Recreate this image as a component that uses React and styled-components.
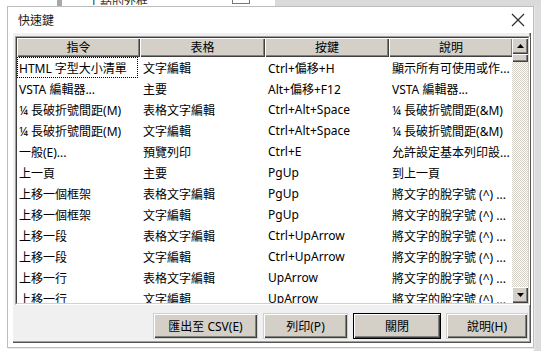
import styled, { createGlobalStyle } from "styled-components";

const Global = createGlobalStyle`
  html, body {
    margin: 0;
    padding: 0;
    background: #fff;
  }
  body {
    font-family: "Segoe UI", "Noto Sans", "Noto Sans CJK TC", sans-serif;
    font-size: 12px;
    color: #000;
  }
`;

const font = `"Segoe UI", "Noto Sans", "Noto Sans CJK TC", sans-serif`;

const Desktop = styled.div`
  position: relative;
  width: 541px;
  height: 351px;
  overflow: hidden;
  background: #fff;
  display: flex;
  flex-direction: column;
`;

const BackTop = styled.div`
  height: 6px;
  display: flex;
  align-items: flex-end;
  background: #fff;
  .bar {
    width: 5px;
    height: 6px;
    margin-left: 57px;
    background: #a8a8a8;
  }
  .label {
    margin-left: 28px;
    font-size: 12px;
    line-height: 6px;
    height: 6px;
    overflow: hidden;
    color: #333;
    align-self: flex-end;
    transform: translateY(-1px);
  }
  .btn {
    margin-left: 84px;
    width: 16px;
    height: 3px;
    border: 1px solid #777;
    border-top: none;
    align-self: flex-start;
  }
  .grey {
    flex: 1;
    margin-left: 25px;
    height: 6px;
    background: #dadada;
  }
`;

const BackBody = styled.div`
  flex: 1;
  display: flex;
  justify-content: flex-end;
  .side {
    width: 7px;
    background: #dcdcdc;
    border-left: 1px solid #f4f4f4;
  }
`;

const Dialog = styled.div`
  position: absolute;
  left: 7px;
  top: 6px;
  width: 527px;
  height: 342px;
  box-sizing: border-box;
  background: #fff;
  border: 1px solid #bdbdbd;
  display: flex;
  flex-direction: column;
  padding: 0 2px 4px 4px;
  box-shadow: 1px 1px 0 #e9e9e9;
`;

const TitleBar = styled.div`
  height: 25px;
  display: flex;
  align-items: center;
  justify-content: space-between;
  padding: 0 6px 0 6px;
  font-family: ${font};
  font-size: 12px;
  color: #1a1a1a;
`;

const Client = styled.div`
  flex: 1;
  background: #f0f0f0;
  display: flex;
  flex-direction: column;
  padding: 4px 1px 2px 3px;
  box-shadow: inset 1px 1px 0 #fff, inset -1px -1px 0 #555, inset -2px -2px 0 #a0a0a0;
`;

const List = styled.div`
  height: 269px;
  box-sizing: border-box;
  border-style: solid;
  border-width: 1px;
  border-color: #a0a0a0 #fff #fff #a0a0a0;
  background: #fff;
  display: flex;
`;

const ListInner = styled.div`
  flex: 1;
  display: flex;
  border-style: solid;
  border-width: 1px;
  border-color: #404040 #d4d0c8 #d4d0c8 #404040;
  overflow: hidden;
`;

const Table = styled.div`
  flex: 1;
  display: flex;
  flex-direction: column;
  overflow: hidden;
`;

const cols = "123px 125px 124px 124px";

const Header = styled.div`
  display: grid;
  grid-template-columns: ${cols};
  height: 19px;
  flex: none;
`;

const HeadCell = styled.div`
  background: #d4d0c8;
  box-sizing: border-box;
  box-shadow: inset 1px 1px 0 #fff, inset -1px -1px 0 #404040, inset -2px -2px 0 #808080;
  display: flex;
  align-items: center;
  justify-content: center;
  font-size: 12px;
  padding-bottom: 1px;
`;

const Row = styled.div`
  display: grid;
  grid-template-columns: ${cols};
  height: 21px;
  flex: none;
`;

const Cell = styled.div`
  display: flex;
  align-items: center;
  padding-left: ${(p) => (p.$first ? 2 : 3)}px;
  white-space: nowrap;
  overflow: hidden;
  font-size: 12px;
  outline: ${(p) => (p.$focus ? "1px dotted #000" : "none")};
  outline-offset: -1px;
  margin-right: ${(p) => (p.$focus ? 2 : 0)}px;
`;

const Scroll = styled.div`
  width: 16px;
  display: flex;
  flex-direction: column;
  background: repeating-conic-gradient(#fff 0 25%, #d4d0c8 0 50%) 0 0 / 2px 2px;
`;

const ScrollBtn = styled.div`
  height: 16px;
  flex: none;
  box-sizing: border-box;
  background: #d4d0c8;
  box-shadow: inset 1px 1px 0 #fff, inset -1px -1px 0 #404040, inset -2px -2px 0 #808080;
  display: flex;
  align-items: center;
  justify-content: center;
`;

const Thumb = styled.div`
  height: 8px;
  flex: none;
  background: #d4d0c8;
  box-shadow: inset 1px 1px 0 #fff, inset -1px -1px 0 #404040, inset -2px -2px 0 #808080;
`;

const Track = styled.div`
  flex: 1;
`;

const Buttons = styled.div`
  margin-top: 8px;
  display: flex;
  justify-content: flex-end;
  gap: 5px;
  padding-right: 2px;
`;

const Button = styled.div`
  width: ${(p) => p.$w}px;
  height: 26px;
  box-sizing: border-box;
  background: #d4d0c8;
  display: flex;
  align-items: center;
  justify-content: center;
  font-size: 12px;
  border: 1px solid ${(p) => (p.$default ? "#000" : "transparent")};
  box-shadow: inset 1px 1px 0 #fff, inset -1px -1px 0 #404040, inset -2px -2px 0 #808080;
`;

const Arrow = ({ down }) => (
  <svg width="7" height="4" viewBox="0 0 7 4">
    <path d={down ? "M0 0H7L3.5 4Z" : "M0 4H7L3.5 0Z"} fill="#000" />
  </svg>
);

const Close = () => (
  <svg width="14" height="14" viewBox="0 0 14 14">
    <path d="M1 1L13 13M13 1L1 13" stroke="#333" strokeWidth="1.3" fill="none" />
  </svg>
);

const shift = "將文字的脫字號 (^) ...";

const rows = [
  ["HTML 字型大小清單", "文字編輯", "Ctrl+偏移+H", "顯示所有可使用或作..."],
  ["VSTA 編輯器...", "主要", "Alt+偏移+F12", "VSTA 編輯器..."],
  ["¼ 長破折號間距(M)", "表格文字編輯", "Ctrl+Alt+Space", "¼ 長破折號間距(&M)"],
  ["¼ 長破折號間距(M)", "文字編輯", "Ctrl+Alt+Space", "¼ 長破折號間距(&M)"],
  ["一般(E)...", "預覽列印", "Ctrl+E", "允許設定基本列印設..."],
  ["上一頁", "主要", "PgUp", "到上一頁"],
  ["上移一個框架", "表格文字編輯", "PgUp", shift],
  ["上移一個框架", "文字編輯", "PgUp", shift],
  ["上移一段", "表格文字編輯", "Ctrl+UpArrow", shift],
  ["上移一段", "文字編輯", "Ctrl+UpArrow", shift],
  ["上移一行", "表格文字編輯", "UpArrow", shift],
  ["上移一行", "文字編輯", "UpArrow", shift],
];

export default function App() {
  return (
    <>
      <Global />
      <Desktop>
        <BackTop>
          <div className="bar" />
          <div className="label">1 點的外框</div>
          <div className="btn" />
          <div className="grey" />
        </BackTop>
        <BackBody>
          <div className="side" />
        </BackBody>
        <Dialog>
          <TitleBar>
            <span>快速鍵</span>
            <Close />
          </TitleBar>
          <Client>
            <List>
              <ListInner>
                <Table>
                  <Header>
                    <HeadCell>指令</HeadCell>
                    <HeadCell>表格</HeadCell>
                    <HeadCell>按鍵</HeadCell>
                    <HeadCell>說明</HeadCell>
                  </Header>
                  {rows.map((r, i) => (
                    <Row key={i}>
                      {r.map((c, j) => (
                        <Cell key={j} $first={j === 0} $focus={i === 0 && j === 0}>
                          {c}
                        </Cell>
                      ))}
                    </Row>
                  ))}
                </Table>
                <Scroll>
                  <ScrollBtn>
                    <Arrow />
                  </ScrollBtn>
                  <Thumb />
                  <Track />
                  <ScrollBtn>
                    <Arrow down />
                  </ScrollBtn>
                </Scroll>
              </ListInner>
            </List>
            <Buttons>
              <Button $w={105}>匯出至 CSV(E)</Button>
              <Button $w={85}>列印(P)</Button>
              <Button $w={88} $default>關閉</Button>
              <Button $w={82}>說明(H)</Button>
            </Buttons>
          </Client>
        </Dialog>
      </Desktop>
    </>
  );
}
